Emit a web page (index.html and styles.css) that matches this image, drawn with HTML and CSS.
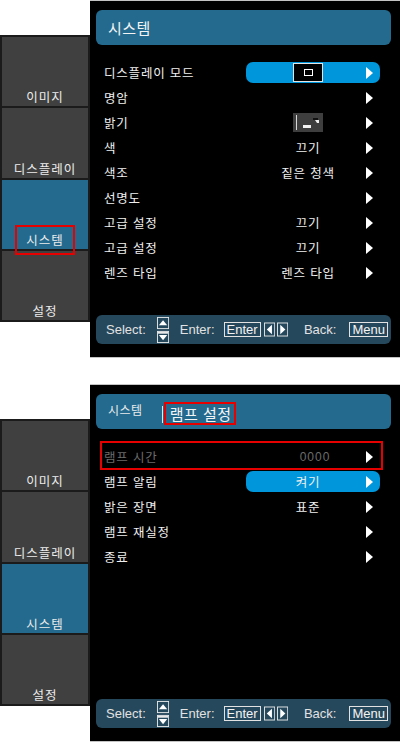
FILE: index.html
```
<!DOCTYPE html>
<html lang="ko">
<head>
  <meta charset="UTF-8">
  <meta name="viewport" content="width=device-width, initial-scale=1.0">
  <title>시스템 메뉴</title>
  <link rel="stylesheet" href="styles.css">
</head>
<body>

  <!-- Screen 1: system menu -->
  <div class="screen">
    <div class="sidebar">
      <div class="tile"><span class="tile-label">이미지</span></div>
      <div class="tile"><span class="tile-label">디스플레이</span></div>
      <div class="tile active"><span class="tile-label marked">시스템</span></div>
      <div class="tile"><span class="tile-label">설정</span></div>
    </div>

    <div class="panel">
      <div class="panel-head">
        <span class="head-title">시스템</span>
      </div>

      <ul class="menu">
        <li class="row">
          <span class="label">디스플레이 모드</span>
          <span class="pill on">
            <span class="val">
              <svg class="mode-icon" width="30" height="19" viewBox="0 0 30 19">
                <rect x="0.5" y="0.5" width="29" height="18" fill="#000" stroke="#e4e4e4"/>
                <rect x="11.5" y="6.5" width="8" height="6" fill="none" stroke="#fff"/>
              </svg>
            </span>
            <svg class="arrow" width="7" height="12" viewBox="0 0 7 12"><path d="M0 0L7 6L0 12Z" fill="#fff"/></svg>
          </span>
        </li>
        <li class="row">
          <span class="label">명암</span>
          <span class="pill">
            <span class="val"></span>
            <svg class="arrow" width="7" height="12" viewBox="0 0 7 12"><path d="M0 0L7 6L0 12Z" fill="#fff"/></svg>
          </span>
        </li>
        <li class="row">
          <span class="label">밝기</span>
          <span class="pill">
            <span class="val">
              <svg class="bright-icon" width="30" height="19" viewBox="0 0 30 19">
                <rect x="0" y="0" width="30" height="19" fill="#3e3e3e"/>
                <rect x="3" y="2" width="1" height="15" fill="#d8d8d8"/>
                <rect x="10" y="12" width="8" height="3" fill="#f2f2f2"/>
                <rect x="20" y="5" width="5" height="2" fill="#111"/>
                <path d="M22 7h4v3h-2z" fill="#eee"/>
              </svg>
            </span>
            <svg class="arrow" width="7" height="12" viewBox="0 0 7 12"><path d="M0 0L7 6L0 12Z" fill="#fff"/></svg>
          </span>
        </li>
        <li class="row">
          <span class="label">색</span>
          <span class="pill">
            <span class="val">끄기</span>
            <svg class="arrow" width="7" height="12" viewBox="0 0 7 12"><path d="M0 0L7 6L0 12Z" fill="#fff"/></svg>
          </span>
        </li>
        <li class="row">
          <span class="label">색조</span>
          <span class="pill">
            <span class="val">짙은 청색</span>
            <svg class="arrow" width="7" height="12" viewBox="0 0 7 12"><path d="M0 0L7 6L0 12Z" fill="#fff"/></svg>
          </span>
        </li>
        <li class="row">
          <span class="label">선명도</span>
          <span class="pill">
            <span class="val"></span>
            <svg class="arrow" width="7" height="12" viewBox="0 0 7 12"><path d="M0 0L7 6L0 12Z" fill="#fff"/></svg>
          </span>
        </li>
        <li class="row">
          <span class="label">고급 설정</span>
          <span class="pill">
            <span class="val">끄기</span>
            <svg class="arrow" width="7" height="12" viewBox="0 0 7 12"><path d="M0 0L7 6L0 12Z" fill="#fff"/></svg>
          </span>
        </li>
        <li class="row">
          <span class="label">고급 설정</span>
          <span class="pill">
            <span class="val">끄기</span>
            <svg class="arrow" width="7" height="12" viewBox="0 0 7 12"><path d="M0 0L7 6L0 12Z" fill="#fff"/></svg>
          </span>
        </li>
        <li class="row">
          <span class="label">렌즈 타입</span>
          <span class="pill">
            <span class="val">렌즈 타입</span>
            <svg class="arrow" width="7" height="12" viewBox="0 0 7 12"><path d="M0 0L7 6L0 12Z" fill="#fff"/></svg>
          </span>
        </li>
      </ul>

      <div class="footer">
        <span class="f-text">Select:</span>
        <svg class="updown" width="13" height="28" viewBox="0 0 13 28">
          <rect x="0.5" y="0.5" width="12" height="12" fill="none" stroke="#e8e8e8"/>
          <path d="M2 9L6.5 3.5L11 9Z" fill="#fff"/>
          <rect x="0.5" y="15.5" width="12" height="12" fill="none" stroke="#e8e8e8"/>
          <rect x="1" y="16" width="11" height="2" fill="#e8e8e8"/>
          <path d="M2 19.5L11 19.5L6.5 25Z" fill="#fff"/>
        </svg>
        <span class="f-text enter">Enter:</span>
        <span class="key">Enter</span>
        <svg class="lr" width="12" height="15" viewBox="0 0 12 15">
          <rect x="0.5" y="0.5" width="11" height="14" fill="none" stroke="#e8e8e8"/>
          <path d="M8.5 2.5L8.5 12.5L3 7.5Z" fill="#fff"/>
        </svg>
        <svg class="lr" width="12" height="15" viewBox="0 0 12 15">
          <rect x="0.5" y="0.5" width="11" height="14" fill="none" stroke="#e8e8e8"/>
          <path d="M3.5 2.5L3.5 12.5L9 7.5Z" fill="#fff"/>
        </svg>
        <span class="f-text back">Back:</span>
        <span class="key menu-key">Menu</span>
      </div>
    </div>
  </div>

  <!-- Screen 2: lamp settings -->
  <div class="screen">
    <div class="sidebar">
      <div class="tile"><span class="tile-label">이미지</span></div>
      <div class="tile"><span class="tile-label">디스플레이</span></div>
      <div class="tile active"><span class="tile-label">시스템</span></div>
      <div class="tile"><span class="tile-label">설정</span></div>
    </div>

    <div class="panel">
      <div class="panel-head">
        <span class="head-sub">시스템</span>
        <span class="head-sep"></span>
        <span class="head-title current">램프 설정</span>
      </div>

      <ul class="menu">
        <li class="row disabled marked-row">
          <span class="label">램프 시간</span>
          <span class="pill">
            <span class="val num">0000</span>
            <svg class="arrow" width="7" height="12" viewBox="0 0 7 12"><path d="M0 0L7 6L0 12Z" fill="#fff"/></svg>
          </span>
        </li>
        <li class="row">
          <span class="label">램프 알림</span>
          <span class="pill on">
            <span class="val">켜기</span>
            <svg class="arrow" width="7" height="12" viewBox="0 0 7 12"><path d="M0 0L7 6L0 12Z" fill="#fff"/></svg>
          </span>
        </li>
        <li class="row">
          <span class="label">밝은 장면</span>
          <span class="pill">
            <span class="val">표준</span>
            <svg class="arrow" width="7" height="12" viewBox="0 0 7 12"><path d="M0 0L7 6L0 12Z" fill="#fff"/></svg>
          </span>
        </li>
        <li class="row">
          <span class="label">램프 재실정</span>
          <span class="pill">
            <span class="val"></span>
            <svg class="arrow" width="7" height="12" viewBox="0 0 7 12"><path d="M0 0L7 6L0 12Z" fill="#fff"/></svg>
          </span>
        </li>
        <li class="row">
          <span class="label">종료</span>
          <span class="pill">
            <span class="val"></span>
            <svg class="arrow" width="7" height="12" viewBox="0 0 7 12"><path d="M0 0L7 6L0 12Z" fill="#fff"/></svg>
          </span>
        </li>
      </ul>

      <div class="footer">
        <span class="f-text">Select:</span>
        <svg class="updown" width="13" height="28" viewBox="0 0 13 28">
          <rect x="0.5" y="0.5" width="12" height="12" fill="none" stroke="#e8e8e8"/>
          <path d="M2 9L6.5 3.5L11 9Z" fill="#fff"/>
          <rect x="0.5" y="15.5" width="12" height="12" fill="none" stroke="#e8e8e8"/>
          <rect x="1" y="16" width="11" height="2" fill="#e8e8e8"/>
          <path d="M2 19.5L11 19.5L6.5 25Z" fill="#fff"/>
        </svg>
        <span class="f-text enter">Enter:</span>
        <span class="key">Enter</span>
        <svg class="lr" width="12" height="15" viewBox="0 0 12 15">
          <rect x="0.5" y="0.5" width="11" height="14" fill="none" stroke="#e8e8e8"/>
          <path d="M8.5 2.5L8.5 12.5L3 7.5Z" fill="#fff"/>
        </svg>
        <svg class="lr" width="12" height="15" viewBox="0 0 12 15">
          <rect x="0.5" y="0.5" width="11" height="14" fill="none" stroke="#e8e8e8"/>
          <path d="M3.5 2.5L3.5 12.5L9 7.5Z" fill="#fff"/>
        </svg>
        <span class="f-text back">Back:</span>
        <span class="key menu-key">Menu</span>
      </div>
    </div>
  </div>

</body>
</html>
```

FILE: styles.css
```
  * {
    box-sizing: border-box;
  }
  body, html {
    margin: 0;
    padding: 0;
    background-color: #fff;
    font-family: "Noto Sans CJK KR", "Noto Sans", sans-serif;
    color: #f0f0f0;
  }
  body {
    display: flex;
    flex-direction: column;
    gap: 26px;
  }
  .screen {
    display: flex;
    align-items: flex-start;
  }

  /* left tab column */
  .sidebar {
    width: 90px;
    height: 287px;
    margin-top: 35px;
    padding: 2px;
    background-color: #1b1b1b;
    display: flex;
    flex-direction: column;
    gap: 2px;
  }
  .tile {
    flex: 1;
    background-color: #404040;
    display: flex;
    justify-content: center;
    align-items: flex-end;
    padding-bottom: 1px;
  }
  .tile.active {
    background-color: #236a8e;
  }
  .tile-label {
    font-size: 12.5px;
    line-height: 16px;
    letter-spacing: 1px;
    color: #ececec;
    position: relative;
  }
  .tile-label.marked::after {
    content: '';
    position: absolute;
    left: -11px;
    right: -11px;
    top: -7px;
    bottom: -7px;
    border: 2px solid #e60000;
  }

  /* main OSD panel */
  .panel {
    width: 310px;
    height: 358px;
    background-color: #000;
    border-top: 1px solid #c4c4c4;
    border-bottom: 1px solid #c4c4c4;
    display: flex;
    flex-direction: column;
  }
  .panel-head {
    margin: 9px 9px 0 6px;
    height: 35px;
    border-radius: 6px;
    background-color: #236a8e;
    display: flex;
    align-items: center;
    padding-left: 12px;
  }
  .head-title {
    font-size: 15px;
    letter-spacing: 0.5px;
    color: #f4f4f4;
    line-height: 18px;
  }
  .head-sub {
    font-size: 12px;
    letter-spacing: 0.5px;
    color: #eaeaea;
    margin-top: -4px;
  }
  .head-sep {
    width: 1px;
    height: 17px;
    background-color: #e8e8e8;
    margin: 6px 0 0 19px;
  }
  .head-title.current {
    margin-left: 1px;
    padding: 1px 2px 0 4px;
    border: 2px solid #e60000;
    margin-top: 3px;
  }

  .menu {
    list-style: none;
    margin: 15px 0 0 0;
    padding: 0 20px 0 14px;
  }
  .row {
    height: 25px;
    display: flex;
    align-items: center;
    font-size: 12.5px;
    letter-spacing: 0.8px;
    position: relative;
  }
  .row .label {
    flex: 1;
    color: #f0f0f0;
  }
  .row.disabled .label,
  .row.disabled .val {
    color: #6c6c6c;
  }
  .row.marked-row::after {
    content: '';
    position: absolute;
    left: -4px;
    right: -3px;
    top: -3px;
    bottom: -1px;
    border: 2px solid #e60000;
  }
  .pill {
    width: 134px;
    height: 21px;
    display: flex;
    align-items: center;
    border-radius: 7px;
    padding-left: 4px;
  }
  .pill.on {
    background-color: #0096db;
  }
  .val {
    width: 116px;
    text-align: center;
    color: #f0f0f0;
    line-height: 16px;
    display: flex;
    justify-content: center;
  }
  .val.num {
    font-family: "Liberation Sans", Arial, sans-serif;
    font-size: 12px;
    letter-spacing: 1px;
    padding-left: 14px;
    color: #707070;
  }
  .arrow {
    display: block;
  }

  /* key hint bar */
  .footer {
    margin: auto 9px 13px 6px;
    height: 29px;
    border-radius: 6px;
    background-color: #26485c;
    display: flex;
    align-items: center;
    padding-left: 10px;
    font-family: "Liberation Sans", Arial, sans-serif;
    font-size: 13px;
    color: #e2e2e2;
  }
  .updown {
    display: block;
    margin-left: 11px;
  }
  .f-text.enter {
    margin-left: 11px;
  }
  .key {
    border: 1px solid #e2e2e2;
    height: 15px;
    line-height: 13px;
    padding: 0 2px;
    margin-left: 9px;
    margin-right: 3px;
    color: #f4f4f4;
  }
  .lr {
    display: block;
    margin-right: 2px;
  }
  .f-text.back {
    margin-left: 14px;
  }
  .key.menu-key {
    margin-left: 13px;
  }
```
